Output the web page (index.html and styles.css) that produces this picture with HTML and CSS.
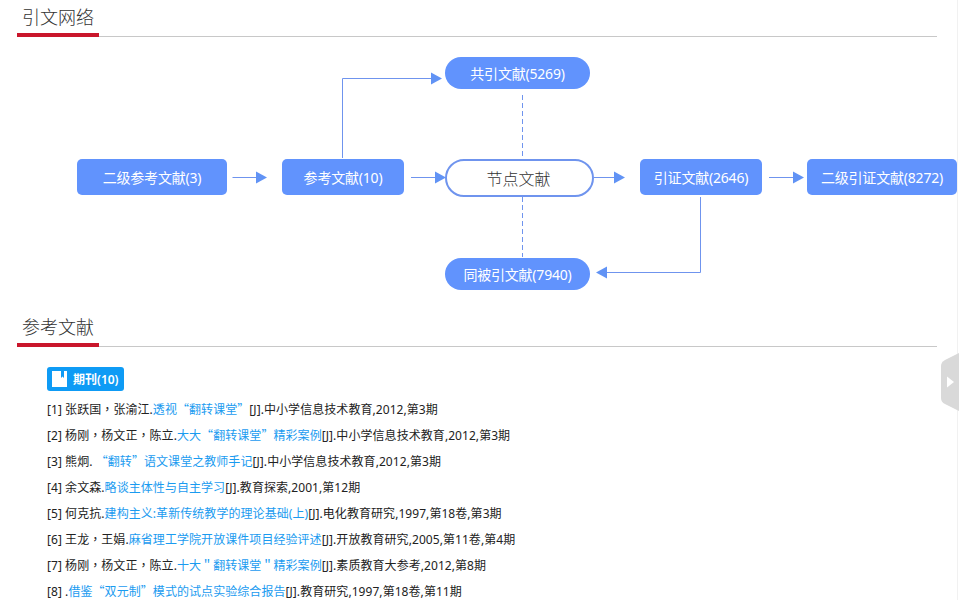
FILE: index.html
```html
<!DOCTYPE html>
<html lang="zh-CN">
<head>
<meta charset="utf-8">
<title>引文网络</title>
<link rel="stylesheet" href="styles.css">
</head>
<body>
<main class="page">
  <section class="network">
    <header class="sec-head"><h2 class="sec-title">引文网络</h2></header>
    <div class="diagram">
      <svg class="links" width="959" height="300" viewBox="0 0 959 300">
        <g class="line">
          <path d="M232.500 177.500H257"/>
          <path d="M411 177.500H435"/>
          <path d="M594 177.500H614"/>
          <path d="M769 177.500H794"/>
          <path d="M342.500 158V78.500H432"/>
          <path d="M700.500 197V272.500H607"/>
        </g>
        <g class="dash">
          <path d="M522.500 95V159"/>
          <path d="M522.500 197V257"/>
        </g>
        <g class="head">
          <path d="M256 171.500L267 177.500L256 183.500Z"/>
          <path d="M435 171.500L446 177.500L435 183.500Z"/>
          <path d="M614 171.500L625 177.500L614 183.500Z"/>
          <path d="M793 171.500L804 177.500L793 183.500Z"/>
          <path d="M431 72.500L442 78.500L431 84.500Z"/>
          <path d="M607 266.500L596 272.500L607 278.500Z"/>
        </g>
      </svg>
      <a class="node rect n-l2">二级参考文献(3)</a>
      <a class="node rect n-l1">参考文献(10)</a>
      <a class="node center">节点文献</a>
      <a class="node rect n-r1">引证文献(2646)</a>
      <a class="node rect n-r2">二级引证文献(8272)</a>
      <a class="node pill n-top">共引文献(5269)</a>
      <a class="node pill n-bot">同被引文献(7940)</a>
    </div>
  </section>

  <section class="refs">
    <header class="sec-head"><h2 class="sec-title">参考文献</h2></header>
    <div class="refs-body">
      <div class="badge">
        <svg class="badge-icon" width="15" height="16" viewBox="0 0 15 16"><path d="M0 0H9V7L10.500 5.500L12 7V0H15V16H0Z"/></svg>
        <span>期刊(10)</span>
      </div>
      <ol class="ref-list">
        <li>[1] 张跃国<span class="cjk" lang="zh-TW">，</span>张渝江.<a>透视<span class="cjk">“</span>翻转课堂<span class="cjk">”</span></a>[J].中小学信息技术教育,2012,第3期</li>
        <li>[2] 杨刚<span class="cjk" lang="zh-TW">，</span>杨文正<span class="cjk" lang="zh-TW">，</span>陈立.<a>大大<span class="cjk">“</span>翻转课堂<span class="cjk">”</span>精彩案例</a>[J].中小学信息技术教育,2012,第3期</li>
        <li>[3] 熊炯. <a><span class="cjk">“</span>翻转<span class="cjk">”</span>语文课堂之教师手记</a>[J].中小学信息技术教育,2012,第3期</li>
        <li>[4] 余文森.<a>略谈主体性与自主学习</a>[J].教育探索,2001,第12期</li>
        <li>[5] 何克抗.<a>建构主义:革新传统教学的理论基础(上)</a>[J].电化教育研究,1997,第18卷,第3期</li>
        <li>[6] 王龙<span class="cjk" lang="zh-TW">，</span>王娟.<a>麻省理工学院开放课件项目经验评述</a>[J].开放教育研究,2005,第11卷,第4期</li>
        <li>[7] 杨刚<span class="cjk" lang="zh-TW">，</span>杨文正<span class="cjk" lang="zh-TW">，</span>陈立.<a>十大＂翻转课堂＂精彩案例</a>[J].素质教育大参考,2012,第8期</li>
        <li>[8] .<a>借鉴<span class="cjk">“</span>双元制<span class="cjk">”</span>模式的试点实验综合报告</a>[J].教育研究,1997,第18卷,第11期</li>
      </ol>
    </div>
  </section>
</main>
<div class="rail"></div>
<svg class="side-tab" width="18" height="58" viewBox="0 0 18 58">
  <path class="tab-body" d="M18 0V58L4 51Q0 49 0 45V13Q0 9 4 7Z"/>
  <path class="tab-arrow" d="M6 23.500L13 29L6 34.500Z"/>
</svg>
</body>
</html>
```
FILE: styles.css
```css
html, body {
  margin: 0;
  padding: 0;
  height: 600px;
  overflow: hidden;
  background: #fff;
}
body {
  position: relative;
  font-family: "Noto Sans", "Noto Sans CJK SC", "Liberation Sans", sans-serif;
  color: #333;
}
.page {
  width: 920px;
  margin-left: 17px;
}
.sec-head {
  height: 36px;
  border-bottom: 1px solid #c8c8c8;
  display: flex;
  align-items: flex-end;
}
.sec-title {
  margin: 0 0 -1px;
  width: 82px;
  height: 33px;
  box-sizing: border-box;
  padding-left: 5px;
  border-bottom: 4px solid #c9162b;
  font-size: 18px;
  font-weight: 300;
  line-height: 24px;
  white-space: nowrap;
  font-family: "Noto Sans CJK SC", sans-serif;
  color: #333;
}
.diagram {
  height: 273px;
  margin-left: -17px;
  width: 959px;
  position: relative;
}
.links {
  position: absolute;
  left: 0;
  top: -37px;
}
.line path { fill: none; stroke: #6f94ee; stroke-width: 1; }
.dash path { fill: none; stroke: #6f94ee; stroke-width: 1; stroke-dasharray: 5 3; }
.head path { fill: #6193f5; }
.node {
  position: absolute;
  display: flex;
  align-items: center;
  justify-content: center;
  box-sizing: border-box;
  padding-bottom: 1px;
  font-size: 14px;
  font-weight: 400;
  color: #fff;
  background: #6193fd;
  white-space: nowrap;
  letter-spacing: -0.2px;
}
.rect { top: 122px; height: 36px; border-radius: 5px; }
.n-l2 { left: 77px; width: 150px; }
.n-l1 { left: 282px; width: 122px; }
.n-r1 { left: 640px; width: 122px; }
.n-r2 { left: 807px; width: 150px; }
.center {
  left: 445px;
  top: 122px;
  width: 149px;
  height: 38px;
  padding: 0 2px 0 0;
  border: 2px solid #6f94ee;
  border-radius: 19px;
  background: #fff;
  color: #333;
  font-size: 16px;
  font-weight: 300;
  letter-spacing: 0;
}
.pill { left: 445px; width: 145px; height: 32px; border-radius: 16px; }
.n-top { top: 20px; }
.n-bot { top: 221px; }
.refs-body { padding: 20px 0 0 30px; }
.badge {
  display: inline-flex;
  align-items: center;
  gap: 6px;
  height: 24px;
  width: 77px;
  box-sizing: border-box;
  padding-left: 5px;
  border-radius: 3px;
  background: #0e9bf5;
  color: #fff;
  font-size: 12px;
  font-weight: 600;
  vertical-align: top;
}
.badge-icon path { fill: #fff; }
.ref-list {
  list-style: none;
  margin: 6px 0 0;
  padding: 0;
}
.ref-list li {
  height: 26px;
  line-height: 26px;
  font-size: 12px;
  letter-spacing: 0.06px;
  color: #222;
  white-space: nowrap;
}
.ref-list a { color: #1a9bf0; }
.cjk { font-family: "Noto Sans CJK SC", sans-serif; line-height: 0; }
.cjk:lang(zh-TW) { font-family: "Noto Sans CJK TC", sans-serif; }
.rail {
  position: absolute;
  right: 1px;
  top: 0;
  width: 1px;
  height: 600px;
  background: #f1f1f1;
}
.side-tab {
  position: absolute;
  left: 941px;
  top: 353px;
}
.tab-body { fill: #d9d9d9; }
.tab-arrow { fill: #fff; }
```
